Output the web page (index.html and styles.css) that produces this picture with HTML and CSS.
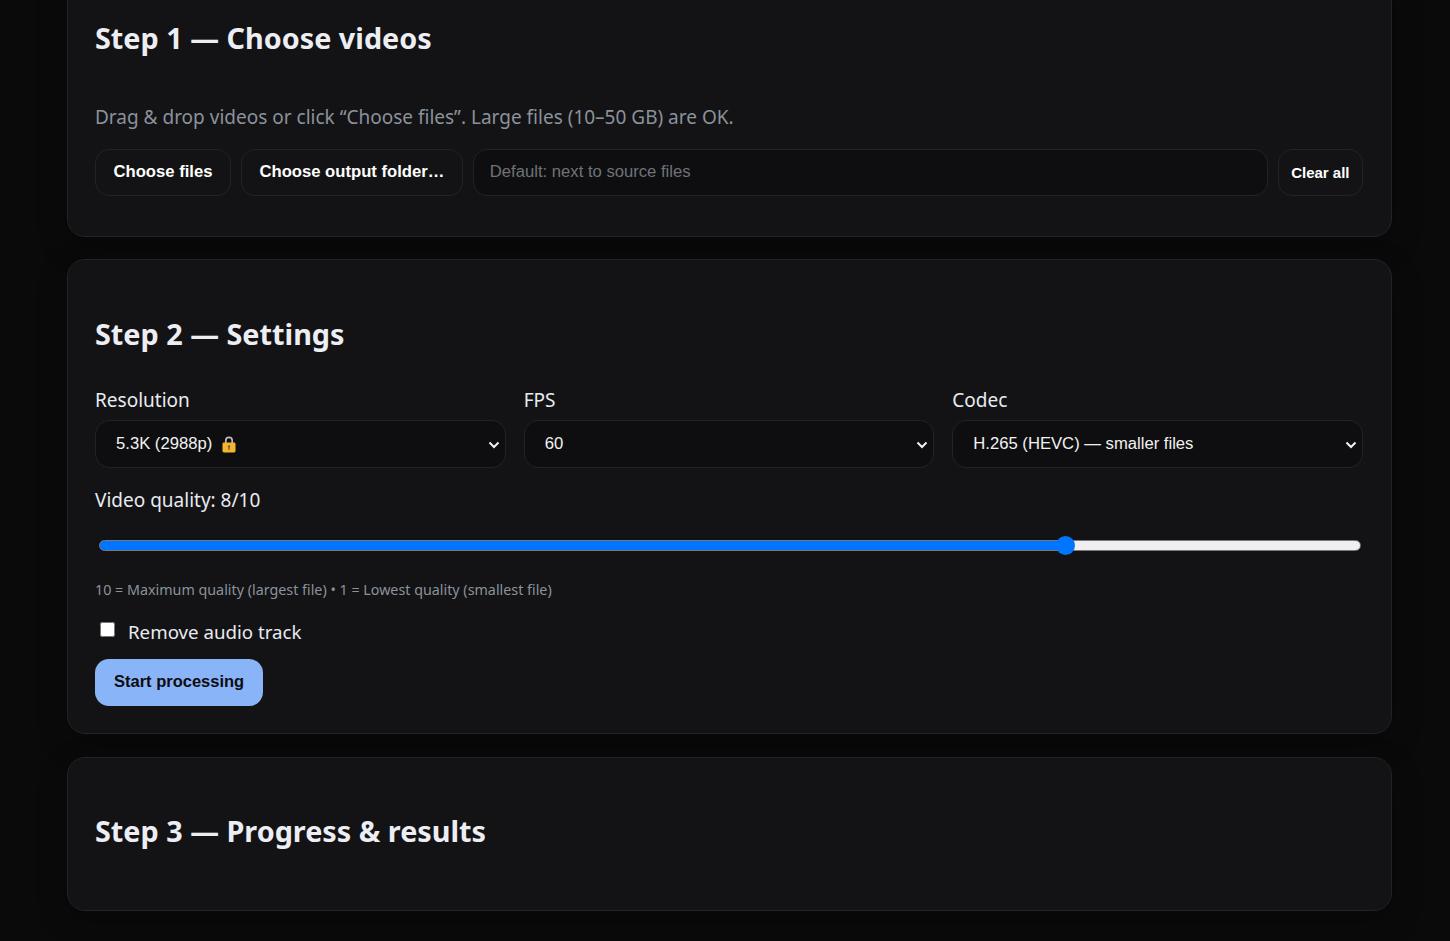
FILE: index.html
```html
<!DOCTYPE html>
<html lang="en">
<head>
    <meta charset="UTF-8">
    <meta name="viewport" content="width=device-width, initial-scale=1.0">
    <title>Video converter</title>
    <link rel="stylesheet" href="styles.css">
</head>
<body>
    <div class="container">
        <section class="card card-first">
            <h2>Step 1 — Choose videos</h2>
            <p class="hint">Drag &amp; drop videos or click “Choose files”. Large files (10–50 GB) are OK.</p>
            <div class="file-row">
                <button class="btn">Choose files</button>
                <button class="btn">Choose output folder…</button>
                <input class="folder-input" type="text" placeholder="Default: next to source files">
                <button class="btn btn-small">Clear all</button>
            </div>
        </section>

        <section class="card card-settings">
            <h2>Step 2 — Settings</h2>
            <div class="settings-grid">
                <div class="field">
                    <label>Resolution</label>
                    <div class="select">
                        <span>5.3K (2988p)</span>
                        <svg class="lock" viewBox="0 0 14 17" width="14" height="17">
                            <path d="M3.8 7.5V4.6a3.2 3.2 0 0 1 6.4 0v2.9" fill="none" stroke="#b9bcc2" stroke-width="1.7"/>
                            <rect x="0.5" y="6.5" width="13" height="10" rx="1.4" fill="#f4b42c"/>
                            <path d="M7 9.2a1.2 1.2 0 0 1 .6 2.2v2.6H6.4v-2.6A1.2 1.2 0 0 1 7 9.2z" fill="#5d5560"/>
                        </svg>
                        <svg class="chevron" viewBox="0 0 12 8" width="12" height="8"><path d="M1.5 1.5 6 6l4.5-4.5" fill="none" stroke="#f2f2f2" stroke-width="2"/></svg>
                    </div>
                </div>
                <div class="field">
                    <label>FPS</label>
                    <div class="select">
                        <span>60</span>
                        <svg class="chevron" viewBox="0 0 12 8" width="12" height="8"><path d="M1.5 1.5 6 6l4.5-4.5" fill="none" stroke="#f2f2f2" stroke-width="2"/></svg>
                    </div>
                </div>
                <div class="field">
                    <label>Codec</label>
                    <div class="select">
                        <span>H.265 (HEVC) — smaller files</span>
                        <svg class="chevron" viewBox="0 0 12 8" width="12" height="8"><path d="M1.5 1.5 6 6l4.5-4.5" fill="none" stroke="#f2f2f2" stroke-width="2"/></svg>
                    </div>
                </div>
            </div>
            <div class="quality-label">Video quality: 8/10</div>
            <input class="quality-slider" type="range" min="0" max="1000" value="770">
            <p class="small-hint">10 = Maximum quality (largest file) • 1 = Lowest quality (smallest file)</p>
            <label class="check-row"><input type="checkbox"> Remove audio track</label>
            <button class="btn-primary">Start processing</button>
        </section>

        <section class="card card-results">
            <h2>Step 3 — Progress &amp; results</h2>
        </section>
    </div>
</body>
</html>
```

FILE: styles.css
```css
html, body {
    height: 100%;
}

body {
    margin: 0;
    background: #0a0a0b;
    color: #e9ebf0;
    font-family: "Noto Sans", "Open Sans", sans-serif;
    overflow: hidden;
}

.container {
    width: 1325px;
    margin: -40px 0 0 67px;
    display: flex;
    flex-direction: column;
}

.card {
    box-sizing: border-box;
    background: #131315;
    border: 1px solid #222327;
    border-radius: 18px;
    padding: 0 28px 0 27px;
    box-shadow: 0 10px 30px rgba(0,0,0,0.25);
}

.card-first {
    height: 277px;
}

.card-settings {
    height: 475px;
    margin-top: 22px;
}

.card-results {
    height: 154px;
    margin-top: 23px;
}

h2 {
    margin: 0;
    font-size: 28.8px;
    line-height: 38px;
    font-weight: 700;
    color: #eceef4;
}

.card-first h2 {
    padding-top: 58px;
}

.card-settings h2 {
    padding-top: 55px;
}

.card-results h2 {
    padding-top: 54px;
}

.hint {
    margin: 46px 0 0;
    font-size: 19px;
    line-height: 28px;
    color: #8b929b;
}

.file-row {
    display: flex;
    gap: 10px;
    margin-top: 18px;
}

.btn {
    height: 47px;
    padding: 0 17.5px 2px;
    background: #131315;
    border: 1px solid #222327;
    border-radius: 14px;
    color: #fff;
    font-family: "Liberation Sans", Arial, sans-serif;
    font-size: 16.65px;
    font-weight: 700;
}

.btn-small {
    padding: 0 12.5px 1px;
    font-size: 15px;
}

.folder-input {
    flex: 1;
    min-width: 0;
    height: 47px;
    box-sizing: border-box;
    padding: 0 16px 2px;
    background: #0e0e10;
    border: 1px solid #222327;
    border-radius: 14px;
    color: #fff;
    font-family: "Liberation Sans", Arial, sans-serif;
    font-size: 16.65px;
}

.folder-input::placeholder {
    color: #6f7378;
}

.settings-grid {
    display: grid;
    grid-template-columns: repeat(3, 1fr);
    gap: 18px;
    margin-top: 33px;
}

.field label {
    display: block;
    font-size: 19px;
    line-height: 28px;
    color: #e9ebf0;
}

.select {
    position: relative;
    display: flex;
    align-items: center;
    gap: 10px;
    box-sizing: border-box;
    height: 48px;
    margin-top: 6px;
    padding: 0 20px;
    background: #0e0e10;
    border: 1px solid #222327;
    border-radius: 14px;
    color: #f2f2f2;
    font-family: "Liberation Sans", Arial, sans-serif;
    font-size: 16.65px;
}

.chevron {
    position: absolute;
    right: 5px;
    top: 20px;
}

.quality-label {
    margin-top: 18px;
    font-size: 19px;
    line-height: 28px;
}

.quality-slider {
    display: block;
    width: calc(100% - 6px);
    height: 20px;
    margin: 21px 2px 0 4px;
    background: transparent;
    -webkit-appearance: none;
    appearance: none;
}

.quality-slider::-webkit-slider-runnable-track {
    box-sizing: border-box;
    height: 11px;
    border: 1px solid #77797d;
    border-radius: 6px;
    background: linear-gradient(to right, #0075ff 76.4%, #efefef 76.4%);
}

.quality-slider::-webkit-slider-thumb {
    -webkit-appearance: none;
    width: 19px;
    height: 19px;
    margin-top: -5px;
    border-radius: 50%;
    background: #0075ff;
}

.small-hint {
    margin: 25px 0 0;
    font-size: 14.3px;
    line-height: 20px;
    color: #8b929b;
}

.check-row {
    display: flex;
    align-items: center;
    gap: 13px;
    margin-top: 18px;
    font-size: 18.7px;
    line-height: 28px;
}

.check-row input {
    width: 15px;
    height: 15px;
    margin: -5px 0 0 5px;
}

.btn-primary {
    display: block;
    height: 47px;
    margin-top: 13px;
    padding: 0 19px 2px;
    background: #8ab4f8;
    border: 0;
    border-radius: 14px;
    color: #0c0d10;
    font-family: "Liberation Sans", Arial, sans-serif;
    font-size: 16.5px;
    font-weight: 700;
}
```
